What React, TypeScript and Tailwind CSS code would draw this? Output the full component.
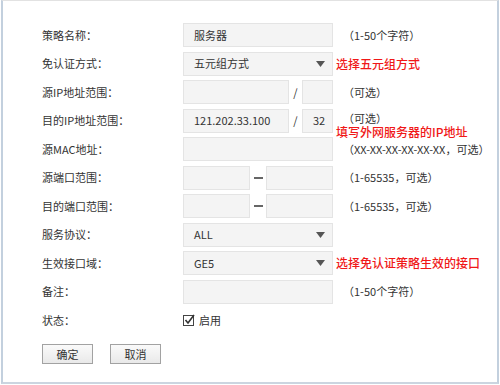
import React from "react";

const font = { fontFamily: '"Noto Sans CJK SC", "Noto Sans", sans-serif' };

function Field({ w, children }: { w: string; children?: React.ReactNode }) {
  return (
    <div className={`${w} h-[24px] bg-[#f4f4f4] border border-[#e4e4e4] flex items-center pl-[10px] text-[11px] text-[#333]`}>
      {children}
    </div>
  );
}

function Select({ value }: { value: string }) {
  return (
    <div className="w-[150px] h-[24px] bg-[#f4f4f4] border border-[#e4e4e4] flex items-center justify-between pl-[10px] pr-[7px] text-[11px] text-[#333]">
      <span>{value}</span>
      <svg width="9" height="6" viewBox="0 0 9 6">
        <path d="M0 0 L9 0 L4.5 6 Z" fill="#555" />
      </svg>
    </div>
  );
}

function Hint({ children, cls = "" }: { children: React.ReactNode; cls?: string }) {
  return <span className={`ml-[10px] text-[11px] text-[#333] whitespace-nowrap ${cls}`}>{children}</span>;
}

function Red({ children }: { children: React.ReactNode }) {
  return <span className="ml-[3px] text-[12px] font-medium text-[#f01818] whitespace-nowrap">{children}</span>;
}

function Row({ label, children, cls = "" }: { label: string; children?: React.ReactNode; cls?: string }) {
  return (
    <div className={`relative h-[24px] flex items-center ${cls}`}>
      <div className="w-[141px] text-[11px] text-[#333] whitespace-nowrap">{label}</div>
      {children}
    </div>
  );
}

function Dash() {
  return (
    <div className="w-[16px] flex justify-center">
      <div className="w-[9px] h-[2px] bg-[#666]" />
    </div>
  );
}

function Slash() {
  return <div className="w-[13px] text-center text-[11px] text-[#333]">/</div>;
}

export default function App() {
  return (
    <div className="w-[500px] h-[385px] bg-white" style={font}>
      <div className="ml-[1px] w-[498px] h-[384px] border-t border-t-[#e2e2e2] border-l-2 border-r-2 border-b-2 border-l-[#c3d0de] border-r-[#c3d0de] border-b-[#cbd5e0] pl-[39px] pt-[22px]">
        <div className="flex flex-col gap-[4.5px]">
          <Row label="策略名称：">
            <Field w="w-[150px]">服务器</Field>
            <Hint>（1-50个字符）</Hint>
          </Row>
          <Row label="免认证方式：">
            <Select value="五元组方式" />
            <Red>选择五元组方式</Red>
          </Row>
          <Row label="源IP地址范围：">
            <Field w="w-[106px]" />
            <Slash />
            <Field w="w-[31px]" />
            <Hint>（可选）</Hint>
          </Row>
          <Row label="目的IP地址范围：">
            <Field w="w-[106px]">121.202.33.100</Field>
            <Slash />
            <Field w="w-[31px]">32</Field>
            <Hint cls="-mt-[4px]">（可选）</Hint>
            <span className="absolute left-[294px] top-[14px] text-[12px] font-medium text-[#f01818] whitespace-nowrap">
              填写外网服务器的IP地址
            </span>
          </Row>
          <Row label="源MAC地址：">
            <Field w="w-[150px]" />
            <Hint>（XX-XX-XX-XX-XX-XX，可选）</Hint>
          </Row>
          <Row label="源端口范围：">
            <Field w="w-[67px]" />
            <Dash />
            <Field w="w-[67px]" />
            <Hint>（1-65535，可选）</Hint>
          </Row>
          <Row label="目的端口范围：">
            <Field w="w-[67px]" />
            <Dash />
            <Field w="w-[67px]" />
            <Hint>（1-65535，可选）</Hint>
          </Row>
          <Row label="服务协议：">
            <Select value="ALL" />
          </Row>
          <Row label="生效接口域：">
            <Select value="GE5" />
            <Red>选择免认证策略生效的接口</Red>
          </Row>
          <Row label="备注：">
            <Field w="w-[150px]" />
            <Hint>（1-50个字符）</Hint>
          </Row>
          <Row label="状态：">
            <div className="flex items-center">
              <svg width="12" height="12" viewBox="0 0 12 12">
                <rect x="0.5" y="1.5" width="10" height="10" fill="white" stroke="#444" strokeWidth="1" />
                <path d="M2.5 6 L5 9 L11 1" fill="none" stroke="#333" strokeWidth="1.6" />
              </svg>
              <span className="ml-[4px] text-[11px] text-[#333]">启用</span>
            </div>
          </Row>
          <div className="mt-[7.5px] flex gap-[17px]">
            <button className="w-[51px] h-[20px] border border-[#a2a2a2] bg-gradient-to-b from-[#fafafa] to-[#e9e9e9] text-[11px] text-[#333] flex items-center justify-center">
              确定
            </button>
            <button className="w-[51px] h-[20px] border border-[#a2a2a2] bg-gradient-to-b from-[#fafafa] to-[#e9e9e9] text-[11px] text-[#333] flex items-center justify-center">
              取消
            </button>
          </div>
        </div>
      </div>
    </div>
  );
}
